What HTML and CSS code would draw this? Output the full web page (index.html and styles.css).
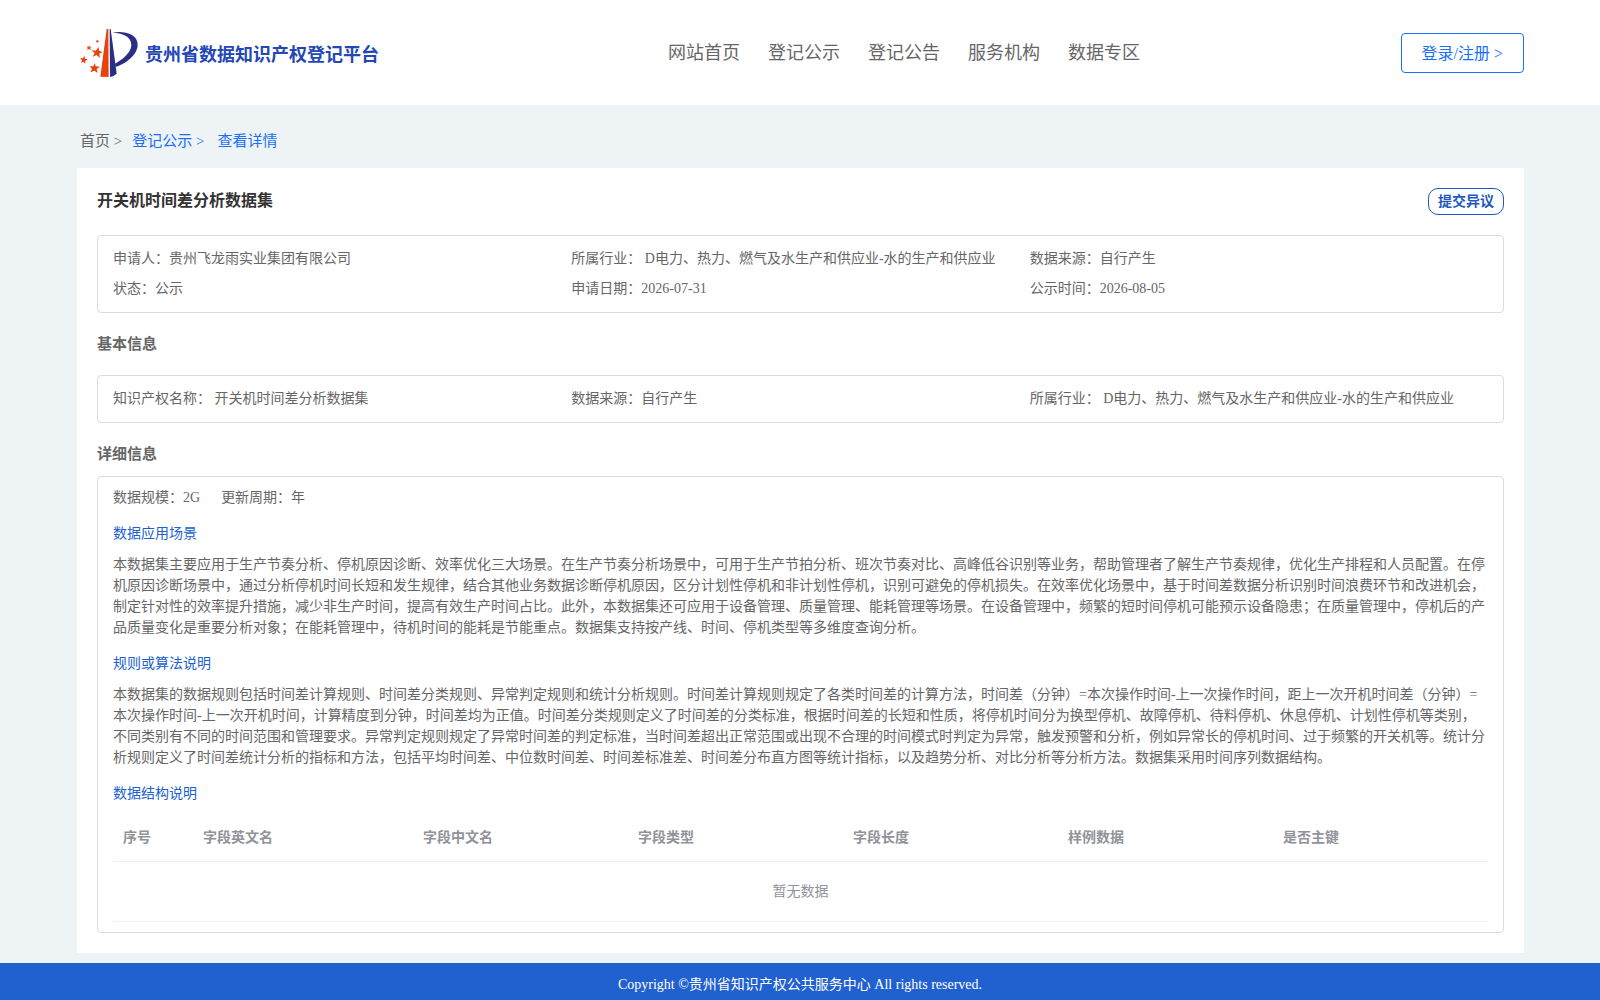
FILE: index.html
```
<!doctype html>
<html lang="zh-CN">

<head>
    <meta charset="UTF-8">
    <title>贵州省数据知识产权登记平台</title>
    <link rel="stylesheet" href="styles.css">
</head>

<body>
    <header class="header">
        <a class="logo" href="#">
            <svg class="logo-icon" viewBox="30 24 174 150" aria-hidden="true">
                <path fill="#e8430f" d="M110 27L115 27L116 171L91 170Z" />
                <path fill="#2a2f86" d="M119 27L122 27L140 161Q131 169 120 171Z" />
                <path fill="#2a2f86" d="M127 38C160 32 204 40 203 76C202 104 168 132 137 141L135 131C158 119 184 97 184 75C184 48 156 39 127 38Z" />
                <path fill="#e8430f" d="M86 81L87 92L98 96L88 101L90 114L80 105L68 110L74 99L64 91L77 92Z" />
                <path fill="#e8430f" d="M74 129L77 139L90 140L80 147L83 159L73 152L61 157L66 147L59 139L70 139Z" />
                <path fill="#e8430f" d="M43 107L45 116L54 118L46 122L46 131L40 125L33 129L36 121L30 115L39 115Z" />
                <path fill="#e8430f" d="M57 76L59 81L64 79L61 84L62 91L57 87L52 91L53 84L50 79L55 81Z" />
                <path fill="#e8430f" d="M82 58L84 62L88 62L85 65L86 68L82 66L79 68L79 64L78 61L82 62Z" />
            </svg>
            <span class="logo-text">贵州省数据知识产权登记平台</span>
        </a>
        <nav class="nav">
            <a href="#">网站首页</a>
            <a href="#">登记公示</a>
            <a href="#">登记公告</a>
            <a href="#">服务机构</a>
            <a href="#">数据专区</a>
        </nav>
        <div class="header-right">
            <button type="button" class="login">登录/注册 &gt;</button>
        </div>
    </header>

    <main class="main">
        <nav class="crumbs">
            <a href="#">首页 &gt;</a>
            <a class="on" href="#">登记公示 &gt;</a>
            <a class="on last" href="#">查看详情</a>
        </nav>

        <div class="card">
            <div class="card-head">
                <h1>开关机时间差分析数据集</h1>
                <button type="button" class="objection">提交异议</button>
            </div>
            <div class="box info">
                <div>申请人：贵州飞龙雨实业集团有限公司</div>
                <div>所属行业： D电力、热力、燃气及水生产和供应业-水的生产和供应业</div>
                <div>数据来源：自行产生</div>
                <div>状态：公示</div>
                <div>申请日期：2026-07-31</div>
                <div>公示时间：2026-08-05</div>
            </div>

            <h2 class="basic-title">基本信息</h2>
            <div class="box info">
                <div>知识产权名称： 开关机时间差分析数据集</div>
                <div>数据来源：自行产生</div>
                <div>所属行业： D电力、热力、燃气及水生产和供应业-水的生产和供应业</div>
            </div>

            <h2 class="detail-title">详细信息</h2>
            <div class="box detail">
                <div class="scale">
                    <span>数据规模：2G</span>
                    <span>更新周期：年</span>
                </div>
                <h3>数据应用场景</h3>
                <p>本数据集主要应用于生产节奏分析、停机原因诊断、效率优化三大场景。在生产节奏分析场景中，可用于生产节拍分析、班次节奏对比、高峰低谷识别等业务，帮助管理者了解生产节奏规律，优化生产排程和人员配置。在停机原因诊断场景中，通过分析停机时间长短和发生规律，结合其他业务数据诊断停机原因，区分计划性停机和非计划性停机，识别可避免的停机损失。在效率优化场景中，基于时间差数据分析识别时间浪费环节和改进机会，制定针对性的效率提升措施，减少非生产时间，提高有效生产时间占比。此外，本数据集还可应用于设备管理、质量管理、能耗管理等场景。在设备管理中，频繁的短时间停机可能预示设备隐患；在质量管理中，停机后的产品质量变化是重要分析对象；在能耗管理中，待机时间的能耗是节能重点。数据集支持按产线、时间、停机类型等多维度查询分析。</p>
                <h3>规则或算法说明</h3>
                <p>本数据集的数据规则包括时间差计算规则、时间差分类规则、异常判定规则和统计分析规则。时间差计算规则规定了各类时间差的计算方法，时间差（分钟）=本次操作时间-上一次操作时间，距上一次开机时间差（分钟）=本次操作时间-上一次开机时间，计算精度到分钟，时间差均为正值。时间差分类规则定义了时间差的分类标准，根据时间差的长短和性质，将停机时间分为换型停机、故障停机、待料停机、休息停机、计划性停机等类别，不同类别有不同的时间范围和管理要求。异常判定规则规定了异常时间差的判定标准，当时间差超出正常范围或出现不合理的时间模式时判定为异常，触发预警和分析，例如异常长的停机时间、过于频繁的开关机等。统计分析规则定义了时间差统计分析的指标和方法，包括平均时间差、中位数时间差、时间差标准差、时间差分布直方图等统计指标，以及趋势分析、对比分析等分析方法。数据集采用时间序列数据结构。</p>
                <h3>数据结构说明</h3>
                <table class="fields">
                    <colgroup>
                        <col class="col-index">
                        <col class="col-en">
                        <col span="5">
                    </colgroup>
                    <thead>
                        <tr>
                            <th>序号</th>
                            <th>字段英文名</th>
                            <th>字段中文名</th>
                            <th>字段类型</th>
                            <th>字段长度</th>
                            <th>样例数据</th>
                            <th>是否主键</th>
                        </tr>
                    </thead>
                    <tbody>
                        <tr>
                            <td class="empty" colspan="7">暂无数据</td>
                        </tr>
                    </tbody>
                </table>
            </div>
        </div>
    </main>

    <footer class="footer">Copyright ©贵州省知识产权公共服务中心 All rights reserved.</footer>
</body>

</html>
```
FILE: styles.css
```
* {
    box-sizing: border-box;
}

body {
    margin: 0;
    background: #eef3f6;
    color: #666;
    font-family: "Liberation Serif", "Noto Sans CJK SC", serif;
    font-size: 14px;
    line-height: 21px;
    text-spacing-trim: space-all;
}

h1,
h2,
h3,
p {
    margin: 0;
}

a {
    color: inherit;
    text-decoration: none;
}

button {
    background: #fff;
    font-family: inherit;
    cursor: pointer;
}

.header {
    display: grid;
    grid-template-columns: 49fr auto 32fr;
    align-items: center;
    height: 105px;
    padding: 0 76px 0 80px;
    background: #fff;
}

.logo {
    display: flex;
    align-items: center;
    gap: 7px;
}

.logo-icon {
    width: 58px;
    height: 50px;
}

.logo-text {
    padding-top: 5px;
    color: #2447b5;
    font-size: 18px;
    font-weight: bold;
    line-height: 24px;
}

.nav {
    display: flex;
    gap: 28px;
    font-size: 18px;
    line-height: 24px;
}

.header-right {
    display: flex;
    justify-content: flex-end;
}

.login {
    height: 40px;
    padding: 0 20px 2px;
    border: 1px solid #1a6ff5;
    border-radius: 4px;
    color: #1a6ff5;
    font-size: 16px;
}

.main {
    padding: 0 76px 10px 77px;
}

.crumbs {
    display: flex;
    gap: 10px;
    padding: 21px 3px 12px;
    font-size: 15px;
    line-height: 30px;
}

.crumbs .on {
    color: #1a6ff5;
}

.crumbs .last {
    margin-left: 3px;
}

.card {
    padding: 20px;
    background: #fff;
}

.card-head {
    display: flex;
    justify-content: space-between;
    align-items: flex-start;
    margin-bottom: 20px;
}

.card-head h1 {
    color: #333;
    font-size: 16px;
    line-height: 26px;
}

.objection {
    height: 27px;
    padding: 0 9px 3px;
    border: 1px solid #1f58c0;
    border-radius: 10px;
    color: #1f58c0;
    font-size: 14px;
    font-weight: bold;
}

.box {
    border: 1px solid #dcdcdc;
    border-radius: 4px;
}

.info {
    display: grid;
    grid-template-columns: repeat(3, 1fr);
    padding: 8px 15px;
    line-height: 30px;
}

.card h2 {
    font-size: 15px;
    line-height: 22px;
}

.card .basic-title {
    padding: 20px 0;
}

.card .detail-title {
    padding: 20px 0 11px;
}

.detail {
    padding: 6px 15px 10px;
}

.scale {
    display: flex;
    gap: 21px;
    margin-bottom: 10px;
    line-height: 30px;
}

.detail h3 {
    margin-bottom: 10px;
    color: #215fce;
    font-size: 14px;
    font-weight: normal;
}

.detail p {
    margin-bottom: 15px;
}

.fields {
    width: 100%;
    border-collapse: separate;
    border-spacing: 0;
    table-layout: fixed;
    color: #909399;
}

.col-index {
    width: 80px;
}

.col-en {
    width: 16%;
}

.fields th,
.fields td {
    padding: 12px 10px;
    border-bottom: 1px solid #ebeef5;
    line-height: 23px;
    text-align: left;
}

.fields .empty {
    height: 60px;
    text-align: center;
}

.footer {
    padding: 11px 0 5px;
    background: #2160cf;
    color: #fff;
    text-align: center;
}
```
